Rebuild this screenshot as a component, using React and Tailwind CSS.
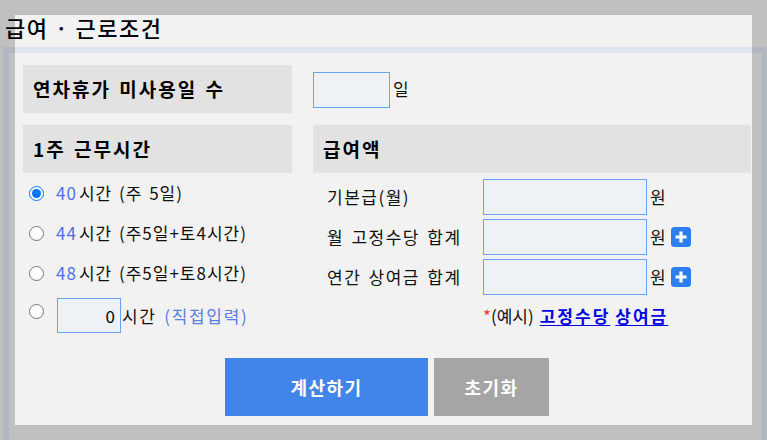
import React from 'react';

function PlusIcon() {
  return (
    <svg width="20" height="20" viewBox="0 0 20 20" className="shrink-0">
      <rect x="0" y="0" width="20" height="20" rx="3.5" fill="#2b7ff0" />
      <path d="M10 4.5v11M4.5 10h11" stroke="#fff" strokeWidth="3.2" strokeLinecap="butt" />
    </svg>
  );
}

function Radio({ checked, className = '' }) {
  return (
    <input
      type="radio"
      name="hours"
      defaultChecked={checked}
      className={`w-[15px] h-[15px] m-0 shrink-0 accent-[#0075ff] ${className}`}
    />
  );
}

function MoneyRow({ label, plus }) {
  return (
    <div className="flex items-center h-[36px]">
      <span className="w-[156px] shrink-0 tracking-[1.5px]">{label}</span>
      <input className="w-[164px] h-[36px] bg-[#eef1f6] border border-[#69a2f4] outline-none px-1" />
      <span className="ml-[3px]">원</span>
      {plus && (
        <span className="ml-[5px]">
          <PlusIcon />
        </span>
      )}
    </div>
  );
}

export default function App() {
  return (
    <div className="relative w-[767px] h-[440px] overflow-hidden bg-[#c0c0c0] pt-[15px] pl-[15px] font-['Noto_Sans_CJK_KR','Noto_Sans',sans-serif] text-[17px] text-[#111] [word-spacing:2px]">
      <div className="w-[737px] h-[410px] bg-[#f2f2f2]">
        <h1 className="-ml-[10px] h-[22px] leading-[24px] text-[22px] font-medium text-black tracking-[1.5px] [word-spacing:0px]">
          급여 · 근로조건
        </h1>

        <div className="mt-[28px] pl-[8px] pr-[1px] grid grid-cols-[269px_438px] gap-x-[21px] gap-y-[12px]">
          <div className="h-[48px] bg-[#e2e2e2] flex items-center pl-[10px] text-[19px] font-bold text-black tracking-[2px]">
            연차휴가 미사용일 수
          </div>
          <div className="h-[48px] flex items-center">
            <input className="w-[77px] h-[36px] mt-[2px] bg-[#eef1f6] border border-[#69a2f4] outline-none px-1" />
            <span className="ml-[3px]">일</span>
          </div>

          <div>
            <div className="h-[48px] bg-[#e2e2e2] flex items-center pl-[10px] text-[19px] font-bold text-black tracking-[2px]">
              1주 근무시간
            </div>
            <div className="pl-[6px] tracking-[1px]">
              <label className="flex items-center h-[40px] gap-[12px]">
                <Radio checked />
                <span>
                  <span className="text-[#4a72e6] mr-[2px]">40</span>시간 (주 5일)
                </span>
              </label>
              <label className="flex items-center h-[40px] gap-[12px]">
                <Radio />
                <span>
                  <span className="text-[#4a72e6] mr-[2px]">44</span>시간 (주5일+토4시간)
                </span>
              </label>
              <label className="flex items-center h-[40px] gap-[12px]">
                <Radio />
                <span>
                  <span className="text-[#4a72e6] mr-[2px]">48</span>시간 (주5일+토8시간)
                </span>
              </label>
              <label className="flex items-center h-[40px] gap-[13px] pt-[5px]">
                <Radio className="mb-[8px]" />
                <input
                  defaultValue="0"
                  className="w-[64px] h-[35px] bg-[#eef1f6] border border-[#69a2f4] outline-none text-right pr-[4px] text-black"
                />
                <span className="-ml-[12px] tracking-[1.7px]">
                  시간 <span className="text-[#5a80e0]">(직접입력)</span>
                </span>
              </label>
            </div>
          </div>

          <div>
            <div className="h-[48px] bg-[#e2e2e2] flex items-center pl-[10px] text-[19px] font-bold text-black tracking-[2px]">
              급여액
            </div>
            <div className="pl-[14px] pt-[6px] flex flex-col gap-[4px]">
              <MoneyRow label="기본급(월)" />
              <MoneyRow label="월 고정수당 합계" plus />
              <MoneyRow label="연간 상여금 합계" plus />
              <div className="h-[34px] flex items-center pl-[156px]">
                <span className="text-[#ff3b3b]">*</span>
                <span>(예시)</span>
                <a href="#" className="ml-[6px] font-bold text-[#0000e6] underline underline-offset-2 tracking-[2px]">
                  고정수당
                </a>
                <a href="#" className="ml-[5px] font-bold text-[#0000e6] underline underline-offset-2 tracking-[2px]">
                  상여금
                </a>
              </div>
            </div>
          </div>
        </div>

        <div className="mt-[25px] flex justify-center gap-[6px] pl-[7px]">
          <button className="w-[203px] h-[58px] bg-[#4285ea] text-white font-bold text-[18px] tracking-[1.5px]">
            계산하기
          </button>
          <button className="w-[115px] h-[58px] bg-[#a5a5a5] text-white font-bold text-[18px] tracking-[1.5px]">
            초기화
          </button>
        </div>
      </div>

      <div className="pointer-events-none absolute left-[3px] top-[47px] w-[765px] h-[420px] border-[6px] border-[rgba(60,90,220,0.1)]" />
    </div>
  );
}
